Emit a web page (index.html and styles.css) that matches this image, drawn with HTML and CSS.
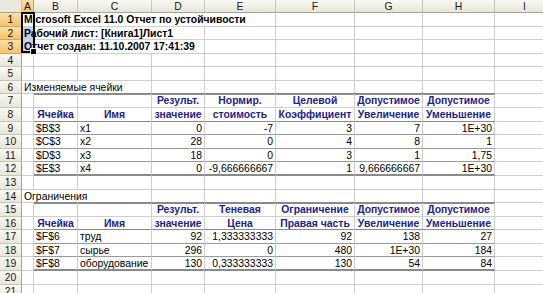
FILE: index.html
```html
<!DOCTYPE html>
<html lang="ru">
<head>
<meta charset="utf-8">
<title>Отчет по устойчивости</title>
<link rel="stylesheet" href="styles.css">
</head>
<body>
<div class="sheet">
  <!-- column headers -->
  <div class="corner"></div>
  <div class="ch on">A</div><div class="ch">B</div><div class="ch">C</div><div class="ch">D</div><div class="ch">E</div><div class="ch">F</div><div class="ch">G</div><div class="ch">H</div><div class="ch">I</div>

  <!-- 1 -->
  <div class="rh on">1</div>
  <div class="c b span-ae">Microsoft Excel 11.0 Отчет по устойчивости</div>
  <div class="c"></div><div class="c"></div><div class="c"></div><div class="c"></div>
  <!-- 2 -->
  <div class="rh on">2</div>
  <div class="c b span-ad sel">Рабочий лист: [Книга1]Лист1</div>
  <div class="c"></div><div class="c"></div><div class="c"></div><div class="c"></div><div class="c"></div>
  <!-- 3 -->
  <div class="rh on">3</div>
  <div class="c b span-ad sel">Отчет создан: 11.10.2007 17:41:39</div>
  <div class="c"></div><div class="c"></div><div class="c"></div><div class="c"></div><div class="c"></div>
  <!-- 4 -->
  <div class="rh">4</div>
  <div class="c"></div><div class="c"></div><div class="c"></div><div class="c"></div><div class="c"></div><div class="c"></div><div class="c"></div><div class="c"></div><div class="c"></div>
  <!-- 5 -->
  <div class="rh">5</div>
  <div class="c"></div><div class="c"></div><div class="c"></div><div class="c"></div><div class="c"></div><div class="c"></div><div class="c"></div><div class="c"></div><div class="c"></div>
  <!-- 6 -->
  <div class="rh">6</div>
  <div class="c span-ac">Изменяемые ячейки</div>
  <div class="c"></div><div class="c"></div><div class="c"></div><div class="c"></div><div class="c"></div><div class="c"></div>
  <!-- 7 -->
  <div class="rh">7</div>
  <div class="c"></div>
  <div class="c tt"></div><div class="c tt"></div>
  <div class="c tt h">Результ.</div><div class="c tt h">Нормир.</div><div class="c tt h">Целевой</div><div class="c tt h">Допустимое</div><div class="c tt h">Допустимое</div>
  <div class="c"></div>
  <!-- 8 -->
  <div class="rh">8</div>
  <div class="c"></div>
  <div class="c hb h">Ячейка</div><div class="c hb h">Имя</div><div class="c hb h">значение</div><div class="c hb h">стоимость</div><div class="c hb h">Коэффициент</div><div class="c hb h">Увеличение</div><div class="c hb h">Уменьшение</div>
  <div class="c"></div>
  <!-- 9 -->
  <div class="rh">9</div>
  <div class="c"></div>
  <div class="c db">$B$3</div><div class="c db">x1</div><div class="c db r">0</div><div class="c db r">-7</div><div class="c db r">3</div><div class="c db r">7</div><div class="c db r">1E+30</div>
  <div class="c"></div>
  <!-- 10 -->
  <div class="rh">10</div>
  <div class="c"></div>
  <div class="c db">$C$3</div><div class="c db">x2</div><div class="c db r">28</div><div class="c db r">0</div><div class="c db r">4</div><div class="c db r">8</div><div class="c db r">1</div>
  <div class="c"></div>
  <!-- 11 -->
  <div class="rh">11</div>
  <div class="c"></div>
  <div class="c db">$D$3</div><div class="c db">x3</div><div class="c db r">18</div><div class="c db r">0</div><div class="c db r">3</div><div class="c db r">1</div><div class="c db r">1,75</div>
  <div class="c"></div>
  <!-- 12 -->
  <div class="rh">12</div>
  <div class="c"></div>
  <div class="c tb">$E$3</div><div class="c tb">x4</div><div class="c tb r">0</div><div class="c tb r">-9,666666667</div><div class="c tb r">1</div><div class="c tb r">9,666666667</div><div class="c tb r">1E+30</div>
  <div class="c"></div>
  <!-- 13 -->
  <div class="rh">13</div>
  <div class="c"></div><div class="c"></div><div class="c"></div><div class="c"></div><div class="c"></div><div class="c"></div><div class="c"></div><div class="c"></div><div class="c"></div>
  <!-- 14 -->
  <div class="rh">14</div>
  <div class="c span-ac">Ограничения</div>
  <div class="c"></div><div class="c"></div><div class="c"></div><div class="c"></div><div class="c"></div><div class="c"></div>
  <!-- 15 -->
  <div class="rh">15</div>
  <div class="c"></div>
  <div class="c tt"></div><div class="c tt"></div>
  <div class="c tt h">Результ.</div><div class="c tt h">Теневая</div><div class="c tt h">Ограничение</div><div class="c tt h">Допустимое</div><div class="c tt h">Допустимое</div>
  <div class="c"></div>
  <!-- 16 -->
  <div class="rh">16</div>
  <div class="c"></div>
  <div class="c hb h">Ячейка</div><div class="c hb h">Имя</div><div class="c hb h">значение</div><div class="c hb h">Цена</div><div class="c hb h">Правая часть</div><div class="c hb h">Увеличение</div><div class="c hb h">Уменьшение</div>
  <div class="c"></div>
  <!-- 17 -->
  <div class="rh">17</div>
  <div class="c"></div>
  <div class="c db">$F$6</div><div class="c db">труд</div><div class="c db r">92</div><div class="c db r">1,333333333</div><div class="c db r">92</div><div class="c db r">138</div><div class="c db r">27</div>
  <div class="c"></div>
  <!-- 18 -->
  <div class="rh">18</div>
  <div class="c"></div>
  <div class="c db">$F$7</div><div class="c db">сырье</div><div class="c db r">296</div><div class="c db r">0</div><div class="c db r">480</div><div class="c db r">1E+30</div><div class="c db r">184</div>
  <div class="c"></div>
  <!-- 19 -->
  <div class="rh">19</div>
  <div class="c"></div>
  <div class="c tb">$F$8</div><div class="c tb">оборудование</div><div class="c tb r">130</div><div class="c tb r">0,333333333</div><div class="c tb r">130</div><div class="c tb r">54</div><div class="c tb r">84</div>
  <div class="c"></div>
  <!-- 20 -->
  <div class="rh">20</div>
  <div class="c"></div><div class="c"></div><div class="c"></div><div class="c"></div><div class="c"></div><div class="c"></div><div class="c"></div><div class="c"></div><div class="c"></div>
  <!-- 21 -->
  <div class="rh">21</div>
  <div class="c"></div><div class="c"></div><div class="c"></div><div class="c"></div><div class="c"></div><div class="c"></div><div class="c"></div><div class="c"></div><div class="c"></div>

  <div class="selection"><span class="handle"></span></div>
</div>
</body>
</html>
```

FILE: styles.css
```css
html, body {
  margin: 0;
  padding: 0;
  background: #fff;
}

body {
  width: 543px;
  height: 293px;
  overflow: hidden;
}

.sheet {
  position: relative;
  display: grid;
  grid-template-columns: 22px 12px 44px 74px 53px 71px 79px 68px 72px 60px;
  grid-template-rows: 13px repeat(21, 13.58px);
  font-family: "Liberation Sans", Arial, sans-serif;
  font-size: 10.4px;
  line-height: 13px;
  color: #000;
}

.corner,
.ch,
.rh {
  box-sizing: border-box;
  background: linear-gradient(#f9f8f3, #e8e6da);
  border-right: 1px solid #c9c6b6;
  border-bottom: 1px solid #c9c6b6;
  color: #1a1a1a;
  text-align: center;
  white-space: nowrap;
}

.corner {
  background: #ebe9df;
  border-bottom-color: #a9a696;
}

.ch {
  border-bottom-color: #a9a696;
}

.rh {
  border-right-color: #a9a696;
  line-height: 13.58px;
}

.ch.on,
.rh.on {
  background: linear-gradient(#fbe0aa, #f3c36a);
  border-right-color: #d6a653;
  border-bottom-color: #d6a653;
}

.c {
  box-sizing: border-box;
  border-right: 1px solid #cfcfcf;
  border-bottom: 1px solid #cfcfcf;
  background: #fff;
  padding: 0 2px;
  white-space: nowrap;
  overflow: visible;
  line-height: 13px;
}

.b {
  font-weight: bold;
}

.span-ae {
  grid-column: 2 / 7;
}

.span-ad {
  grid-column: 2 / 6;
}

.span-ac {
  grid-column: 2 / 5;
}

.sel {
  background: linear-gradient(90deg, #c3d1ee 12px, #fff 12px);
}

.r {
  text-align: right;
}

.h {
  font-weight: bold;
  color: #22228a;
  text-align: center;
}

.tt {
  box-shadow: 0 -1px 0 #8a8a8a, inset 0 1px 0 #8a8a8a;
}

.hb {
  border-bottom-color: #8a8a8a;
}

.db {
  border-bottom-color: #9a9a9a;
}

.tb {
  border-bottom: 2px solid #8a8a8a;
}

.selection {
  position: absolute;
  left: 21px;
  top: 12px;
  width: 14px;
  height: 41px;
  box-sizing: border-box;
  border: 2px solid #000;
  pointer-events: none;
}

.handle {
  position: absolute;
  right: -4px;
  bottom: -4px;
  width: 5px;
  height: 5px;
  background: #000;
  border: 1px solid #fff;
}
```
